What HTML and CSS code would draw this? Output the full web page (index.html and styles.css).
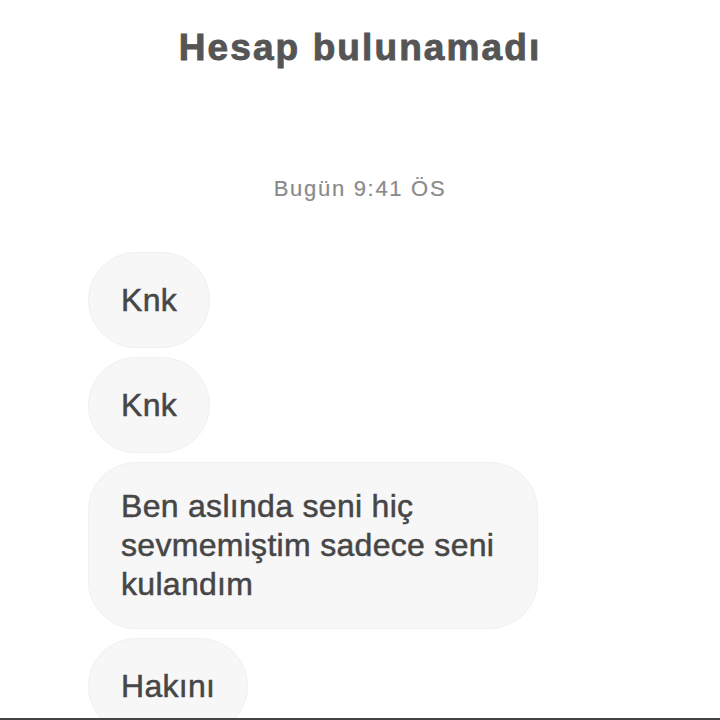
FILE: index.html
```html
<!DOCTYPE html>
<html lang="tr">
<head>
    <meta charset="UTF-8">
    <meta name="viewport" content="width=device-width, initial-scale=1.0">
    <title>Hesap bulunamadı</title>
    <link rel="stylesheet" href="styles.css">
</head>
<body>
    <div class="screen">
        <h1 class="title">Hesap bulunamadı</h1>

        <div class="thread">
            <div class="time">Bugün 9:41 ÖS</div>

            <div class="msg">Knk</div>
            <div class="msg">Knk</div>
            <div class="msg">Ben aslında seni hiç sevmemiştim sadece seni kulandım</div>
            <div class="msg">Hakını</div>
        </div>

        <div class="composer-line"></div>
    </div>
</body>
</html>
```

FILE: styles.css
```css
html, body {
    margin: 0;
    padding: 0;
    background: #fff;
}
.screen {
    width: 720px;
    height: 720px;
    display: flex;
    flex-direction: column;
    overflow: hidden;
    font-family: 'Liberation Sans', Arial, sans-serif;
    color: #4a4a4a;
}
.title {
    margin: 0;
    padding-top: 26px;
    text-align: center;
    font-size: 37px;
    line-height: 44px;
    font-weight: bold;
    letter-spacing: 2.1px;
    color: #555;
    -webkit-text-stroke: 0.9px #555;
}
.thread {
    flex: 1;
    overflow: hidden;
    display: flex;
    flex-direction: column;
    align-items: flex-start;
    gap: 9px;
    padding: 0 88px;
}
.time {
    align-self: stretch;
    text-align: center;
    margin-top: 106px;
    margin-bottom: 41px;
    font-size: 22px;
    line-height: 26px;
    letter-spacing: 1.7px;
    color: #8a8a8a;
    -webkit-text-stroke: 0.2px #8a8a8a;
}
.msg {
    box-sizing: border-box;
    min-height: 96px;
    display: flex;
    align-items: center;
    background: #f7f7f7;
    border: 1px solid #f0f0f0;
    border-radius: 48px;
    padding: 24px 32px;
    font-size: 32px;
    line-height: 39px;
    letter-spacing: 0.3px;
    max-width: 450px;
    flex-shrink: 0;
    color: #464646;
    -webkit-text-stroke: 0.5px #464646;
}
.composer-line {
    height: 2px;
    background: #444;
    flex-shrink: 0;
}
```
